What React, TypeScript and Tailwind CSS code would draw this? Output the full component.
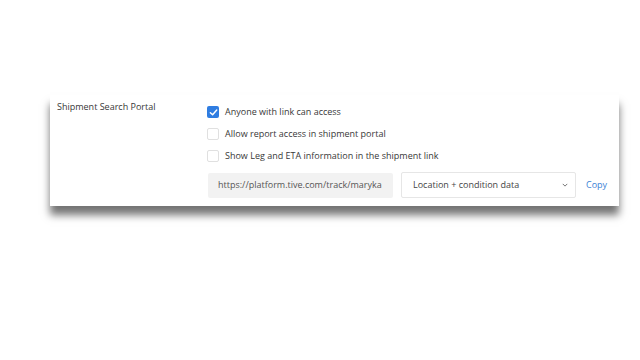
import React from "react";

function Check({ checked }: { checked?: boolean }) {
  if (checked) {
    return (
      <div className="w-[12px] h-[12px] rounded-[2px] bg-[#2f7de1] flex items-center justify-center shrink-0">
        <svg width="9" height="9" viewBox="0 0 10 10" fill="none">
          <path d="M1.5 5.2 L4 7.6 L8.6 2.2" stroke="white" strokeWidth="1.6" strokeLinecap="round" strokeLinejoin="round" />
        </svg>
      </div>
    );
  }
  return <div className="w-[12px] h-[12px] rounded-[2px] border border-[#e0e0e0] bg-white shrink-0" />;
}

export default function App() {
  return (
    <div className="w-[640px] h-[360px] bg-white pt-[95px] pl-[50px] text-[#383838]" style={{ fontFamily: '"Open Sans", sans-serif' }}>
      <div className="w-[569px] h-[111px] bg-white shadow-[0_9px_8px_rgba(0,0,0,0.55)] flex pt-[5px]">
        <div className="w-[157px] pl-[7px] text-[9px] leading-[14px]">Shipment Search Portal</div>
        <div className="flex flex-col">
          <div className="flex flex-col gap-[10px] pt-[6px]">
            <div className="flex items-center gap-[6px] h-[12px] text-[9px]"><Check checked /><span>Anyone with link can access</span></div>
            <div className="flex items-center gap-[6px] h-[12px] text-[9px]"><Check /><span>Allow report access in shipment portal</span></div>
            <div className="flex items-center gap-[6px] h-[12px] text-[9px]"><Check /><span>Show Leg and ETA information in the shipment link</span></div>
          </div>
          <div className="flex items-center mt-[10px] ml-[1px]">
            <div className="w-[185px] h-[25px] bg-[#f2f2f2] rounded-[2px] flex items-center pl-[10px] text-[9px] text-[#555] overflow-hidden whitespace-nowrap">https://platform.tive.com/track/maryka</div>
            <div className="ml-[8px] w-[175px] h-[26px] border border-[#e6e6e6] rounded-[2px] flex items-center justify-between pl-[11px] pr-[7px] text-[9px] text-[#444]">
              <span>Location + condition data</span>
              <svg width="6" height="4" viewBox="0 0 8 5" fill="none"><path d="M1 1 L4 4 L7 1" stroke="#666" strokeWidth="1.2" /></svg>
            </div>
            <div className="ml-[10px] text-[9px] text-[#3b82d6]">Copy</div>
          </div>
        </div>
      </div>
    </div>
  );
}
